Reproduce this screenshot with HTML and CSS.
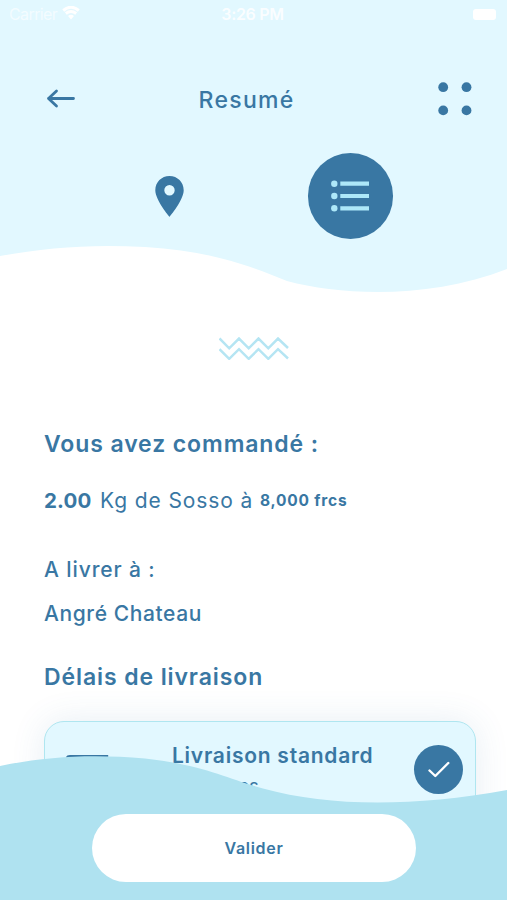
FILE: index.html
```html
<!DOCTYPE html>
<html lang="fr">
<head>
<meta charset="utf-8">
<title>Resumé</title>
<link rel="stylesheet" href="styles.css">
</head>
<body>
<div class="screen">
  <header class="header">
    <svg class="header-wave" viewBox="0 0 507 300"><path d="M0 0H507V269C431 299 343 296 287 281C248 265 210 251 145 247C94 244 49 247 0 256Z" fill="#e2f8ff"/></svg>
    <div class="status">
      <div class="carrier"><span>Carrier</span><svg width="18" height="14" viewBox="0 0 18 14"><path d="M1.200 4.500Q9-2 16.800 4.500M3.800 7.500Q9 3.500 14.200 7.500" fill="none" stroke="#fff" stroke-width="3"/><path d="M6 10Q9 7.500 12 10L9 13.500Z" fill="#fff"/></svg></div>
      <span class="time">3:26 PM</span>
      <i class="battery"></i>
    </div>
    <nav class="nav">
      <svg class="back" width="29" height="19" viewBox="0 0 29 19"><path d="M10.500 2L2.500 9.500L10.500 17M2.500 9.500H27.500" fill="none" stroke="#3977a3" stroke-width="2.800" stroke-linecap="round" stroke-linejoin="round"/></svg>
      <h1 class="title">Resumé</h1>
      <svg width="34" height="34" viewBox="0 0 34 34" fill="#3977a3"><circle cx="5.200" cy="5.200" r="4.900"/><circle cx="28.500" cy="5.200" r="4.900"/><circle cx="5.200" cy="28.400" r="4.900"/><circle cx="28.500" cy="28.400" r="4.900"/></svg>
    </nav>
    <div class="tabs">
      <svg class="pin" width="29" height="41" viewBox="0 0 29 41"><path fill-rule="evenodd" fill="#3977a3" d="M14.500 0C6.500 0 .3 6.200.3 14.200C.3 24 14.500 40.800 14.500 40.800S28.700 24 28.700 14.200C28.700 6.200 22.500 0 14.500 0ZM14.500 9A5.200 5.200 0 1 1 14.500 19.400A5.200 5.200 0 1 1 14.500 9Z"/></svg>
      <div class="tab-active"><svg width="38" height="32" viewBox="0 0 38 32" fill="#ade8f9"><circle cx="3.300" cy="3.700" r="3.200"/><circle cx="3.300" cy="16" r="3.200"/><circle cx="3.300" cy="28.300" r="3.200"/><path d="M9.300 1.600H38V5.800H9.300ZM9.300 13.900H38V18.100H9.300ZM9.300 26.200H38V30.400H9.300Z"/></svg></div>
    </div>
  </header>
  <main class="main">
    <svg class="zigzag" width="70" height="23" viewBox="0 0 70 23"><path d="M.5 1.500L10.200 11.300L20 1.500L29.700 11.300L39.500 1.500L49.300 11.300L59 1.500L69 11M.5 12.200L10.200 21.800L20 12.200L29.700 21.800L39.500 12.200L49.300 21.800L59 12.200L69 21.500" fill="none" stroke="#b5e5f3" stroke-width="2.500"/></svg>
    <h2 class="heading ordered">Vous avez commandé :</h2>
    <p class="order"><b class="qty">2.00</b><span class="item">Kg de Sosso à</span><b class="price">8,000 frcs</b></p>
    <p class="line label">A livrer à :</p>
    <p class="line place">Angré Chateau</p>
    <h2 class="heading delay">Délais de livraison</h2>
    <section class="card">
      <svg class="truck" width="60" height="40" viewBox="0 0 60 40" fill="none" stroke="#3977a3" stroke-width="2.400"><path d="M1 30V4Q1 1.200 4 1.200H41V30H1M41 9H51L58 18V30H41"/><circle cx="13" cy="32" r="5"/><circle cx="47" cy="32" r="5"/></svg>
      <div class="option"><h3 class="option-title">Livraison standard</h3><p class="option-time">48 heures</p></div>
      <div class="check"><svg width="22" height="17" viewBox="0 0 22 17"><path d="M1.500 9.500L7.300 15L20.300 2" fill="none" stroke="#fff" stroke-width="2.400" stroke-linecap="round" stroke-linejoin="round"/></svg></div>
    </section>
  </main>
  <footer class="footer">
    <svg class="footer-wave" viewBox="0 0 507 150"><path d="M0 150V16C48 6 94 4 145 8.500C204 15 228 29 263 38.500C330 57 413 57 507 40V150Z" fill="#afe2f0"/></svg>
    <button class="submit">Valider</button>
  </footer>
</div>
</body>
</html>
```
FILE: styles.css
```css
* { box-sizing: border-box; margin: 0; padding: 0; }
body { background: #fff; color: #3977a3; font-family: Inter, "Open Sans", sans-serif; }
.screen { position: relative; width: 507px; height: 900px; overflow: hidden; }
svg { display: block; flex: none; }
.header { position: relative; height: 300px; }
.header-wave { position: absolute; inset: 0; width: 507px; height: 300px; }
.status { position: relative; display: grid; grid-template-columns: 1fr auto 1fr; align-items: center; height: 28px; padding: 0 11px 0 9px; color: #fff; font-size: 16px; line-height: 28px; }
.carrier { display: flex; gap: 5px; letter-spacing: -.6px; }
.carrier span { opacity: .6; }
.carrier svg { margin-top: 6px; }
.time { font-weight: 600; letter-spacing: -.3px; opacity: .85; }
.battery { justify-self: end; width: 23px; height: 11px; border-radius: 3px; background: #fff; }
.nav { position: relative; display: flex; align-items: center; height: 34px; margin-top: 54px; padding: 0 35px 0 46px; }
.back { margin-top: -2px; }
.title { flex: 1; margin-left: 123.500px; font-size: 23px; font-weight: 500; line-height: 34px; letter-spacing: 1.300px; padding-top: 2px; }
.tabs { position: relative; display: flex; justify-content: space-between; align-items: center; height: 86px; margin-top: 37px; padding: 0 114px 0 155px; }
.tab-active { display: flex; align-items: center; justify-content: center; width: 85.500px; height: 85.500px; border-radius: 50%; background: #3977a3; }
.main { padding: 37px 31px 0 44px; white-space: nowrap; }
.zigzag { margin-left: 175px; }
.heading { font-size: 23px; font-weight: 600; line-height: 32px; letter-spacing: .9px; }
.ordered { margin-top: 68px; }
.order { display: flex; align-items: center; height: 32px; margin-top: 25px; line-height: 32px; }
.qty { width: 56px; font-size: 20.500px; font-weight: 700; letter-spacing: .2px; }
.item { width: 160px; font-size: 21px; font-weight: 400; letter-spacing: .9px; }
.price { font-size: 15.500px; font-weight: 700; letter-spacing: .8px; }
.line { font-size: 21px; font-weight: 500; line-height: 32px; letter-spacing: .6px; }
.label { margin-top: 37px; letter-spacing: .9px; }
.place { margin-top: 12px; }
.delay { margin-top: 31px; }
.card { display: flex; align-items: flex-start; height: 150px; margin-top: 28px; border: 1px solid #afe6f0; border-radius: 20px; background: #e2f8ff; box-shadow: 0 0 34px rgba(57, 119, 163, .12); }
.truck { margin: 32.500px 0 0 21px; }
.option { width: 242px; margin: 18px 0 0 46px; }
.option-title { font-size: 21px; font-weight: 600; line-height: 32px; letter-spacing: .75px; }
.option-time { margin-top: 0; font-size: 18.500px; line-height: 28px; letter-spacing: -.2px; }
.check { display: flex; align-items: center; justify-content: center; flex: none; width: 49px; height: 49px; margin-top: 23px; border-radius: 50%; background: #3977a3; }
.footer { position: absolute; left: 0; bottom: 0; width: 507px; height: 150px; padding: 64px 91px 0 92px; }
.footer-wave { position: absolute; inset: 0; width: 507px; height: 150px; }
.submit { position: relative; display: block; width: 324px; height: 68px; border: 0; border-radius: 34px; background: #fff; color: #3977a3; font: 600 16px Inter, sans-serif; letter-spacing: .7px; }
```
